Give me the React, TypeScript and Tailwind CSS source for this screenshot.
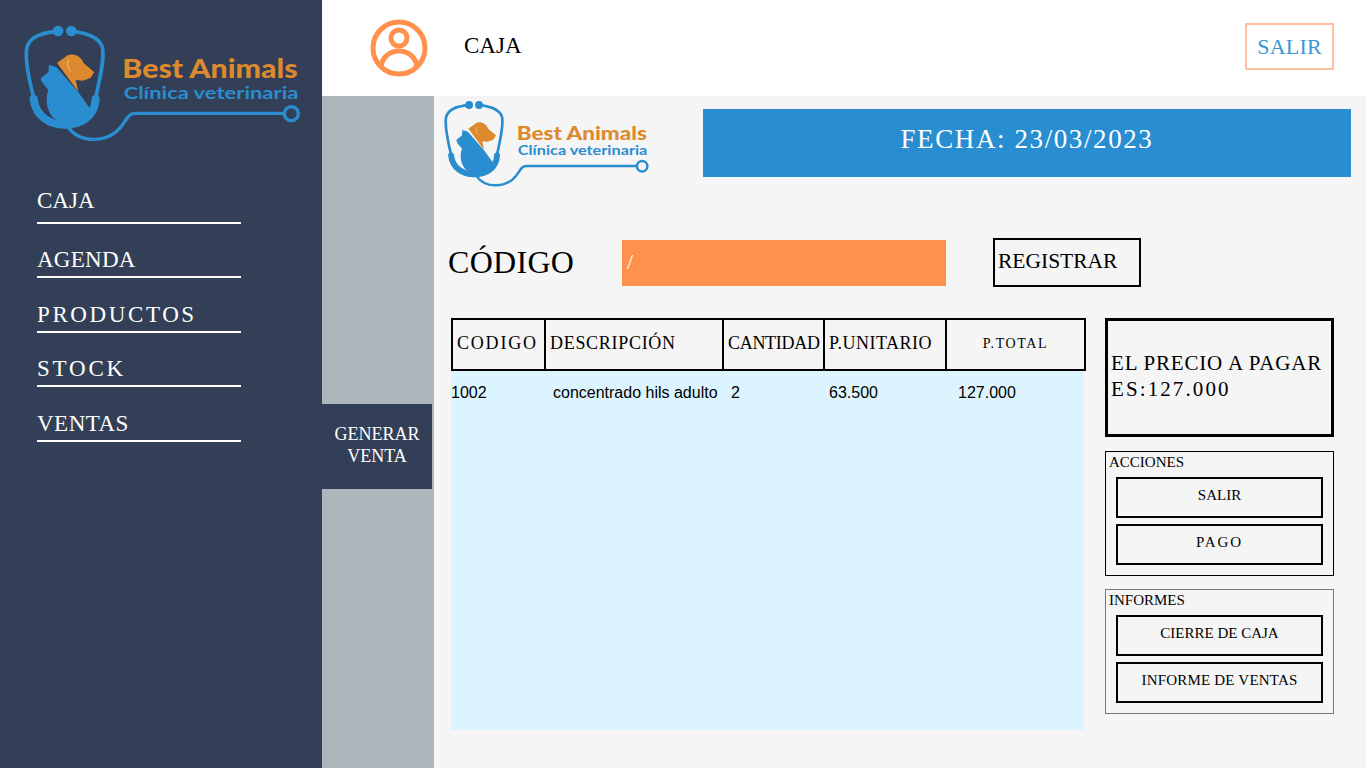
// App.tsx
// Caja screen of the Best Animals veterinary clinic app.

const display = "font-['Liberation_Serif',serif]";

const navItems = [
  { label: "CAJA", cls: "pb-[6px] tracking-[0px]" },
  { label: "AGENDA", cls: "pb-[1px] tracking-[0.25px]" },
  { label: "PRODUCTOS", cls: "pb-[1px] tracking-[2.6px]" },
  { label: "STOCK", cls: "pb-[1px] tracking-[2.8px]" },
  { label: "VENTAS", cls: "pb-[1px] tracking-[0.5px]" },
];

const columns = [
  { label: "CODIGO", width: "w-[93px]", cls: "pl-[4px] text-[18px] tracking-[1.8px]" },
  { label: "DESCRIPCIÓN", width: "w-[178px]", cls: "pl-[4px] text-[18px] tracking-[0.7px]" },
  { label: "CANTIDAD", width: "w-[101px]", cls: "pl-[4px] text-[18px] tracking-[-0.3px]" },
  { label: "P.UNITARIO", width: "w-[122px]", cls: "pl-[4px] text-[18px] tracking-[0.5px]" },
  { label: "P.TOTAL", width: "flex-1", cls: "justify-center text-[14px] tracking-[1.6px]" },
];

// Stethoscope logo, the wordmark stays real text inside the svg
function Logo({ className }: { className: string }) {
  return (
    <svg viewBox="70 40 840 360" className={className}>
      <g fill="none" stroke="#2a8dd0" strokeLinecap="round">
        <path d="M172 65 C125 70 92 80 82 112 C74 150 90 215 102 265" strokeWidth="11" />
        <path d="M218 65 C262 70 298 82 308 112 C316 150 298 215 288 265" strokeWidth="11" />
        <path d="M102 268 C108 320 150 345 195 345 C245 345 285 320 288 268" strokeWidth="24" />
        <path d="M205 352 C240 402 325 402 365 350 L385 322 Q393 311 408 311 L852 311" strokeWidth="10" />
      </g>
      <circle cx="175" cy="64" r="16" fill="#2a8dd0" />
      <circle cx="215" cy="64" r="16" fill="#2a8dd0" />
      <circle cx="875" cy="312" r="21" fill="none" stroke="#2a8dd0" strokeWidth="10" />
      {/* cat */}
      <path
        d="M148 165 L170 172 L236 248 L272 298 L245 335 L195 348 L158 322 C135 290 140 260 146 240 C135 228 122 215 124 205 L146 188 Z"
        fill="#2a8dd0"
      />
      {/* dog */}
      <path
        d="M172 160 L205 136 C225 130 244 140 252 160 L284 188 L272 205 L250 213 L228 211 L236 246 Z"
        fill="#dd8a2e"
      />
      <path d="M207 150 C200 165 208 180 214 186" fill="none" stroke="#f0d9b8" strokeWidth="2" />
      <text
        x="368"
        y="206"
        fill="#dd8a2e"
        fontFamily="Lato, sans-serif"
        fontWeight="900"
        fontSize="78"
        textLength="526"
        lengthAdjust="spacingAndGlyphs"
      >
        Best Animals
      </text>
      <text
        x="372"
        y="268"
        fill="#2a8dd0"
        fontFamily="Lato, sans-serif"
        fontWeight="700"
        fontSize="53"
        textLength="524"
        lengthAdjust="spacingAndGlyphs"
      >
        Clínica veterinaria
      </text>
    </svg>
  );
}

function UserIcon() {
  return (
    <svg viewBox="0 0 58 58" className="h-[58px] w-[58px]" fill="none" stroke="#ff914d" strokeWidth="5">
      <circle cx="29" cy="29" r="26" />
      <circle cx="29" cy="19" r="8" />
      <path d="M11 48 C12 38 20 32 29 32 C38 32 46 38 47 48" />
    </svg>
  );
}

function PanelButton({ label, tracking }: { label: string; tracking: string }) {
  return (
    <div className={`flex h-[41px] justify-center border-2 border-black pt-[6px] text-[15px] leading-[20px] text-black ${tracking} ${display}`}>
      {label}
    </div>
  );
}

type Action = { label: string; tracking: string };

function Panel({ title, actions, border }: { title: string; actions: Action[]; border: string }) {
  return (
    <div className={`h-[125px] border px-[10px] ${border}`}>
      <div className="-ml-[7px] h-[25px] text-[15px] leading-[20px] text-black">{title}</div>
      <div className="flex flex-col gap-[6px]">
        {actions.map((a) => (
          <PanelButton key={a.label} label={a.label} tracking={a.tracking} />
        ))}
      </div>
    </div>
  );
}

export default function App() {
  return (
    <div className={`flex h-[768px] w-full overflow-hidden ${display}`}>
      {/* ── SIDEBAR ──────────────────────────────────────── */}
      <aside className="w-[322px] shrink-0 bg-[#323f56]">
        <div className="pl-[23px] pt-[23px]">
          <Logo className="h-[120px] w-[280px]" />
        </div>
        <nav className="mt-[26px] flex w-[241px] flex-col pl-[37px]">
          {navItems.map((item) => (
            <div
              key={item.label}
              className={`flex h-[54.5px] items-end border-b-2 border-white text-[23px] leading-[30px] text-white ${item.cls}`}
            >
              {item.label}
            </div>
          ))}
        </nav>
      </aside>

      <div className="flex min-w-0 flex-1 flex-col">
        {/* ── HEADER ───────────────────────────────────── */}
        <header className="flex h-[96px] shrink-0 items-center bg-white pl-[48px] pr-[32px]">
          <UserIcon />
          <span className="-mt-[4px] ml-[36px] text-[23px] text-black">CAJA</span>
          <div className="-mt-[4px] ml-auto flex h-[47px] w-[89px] items-center justify-center border-2 border-[#ffbfa3] text-[22px] tracking-[0.2px] text-[#3b97d3]">
            SALIR
          </div>
        </header>

        <div className="flex min-h-0 flex-1">
          {/* ── GRAY COLUMN ──────────────────────────────── */}
          <div className="w-[112px] shrink-0 bg-[#adb6ba] pt-[308px]">
            <div className="flex h-[85px] w-[110px] flex-col items-center justify-center bg-[#323f56] pb-[3px] text-center text-[18px] leading-[22px] text-white">
              <span>GENERAR</span>
              <span>VENTA</span>
            </div>
          </div>

          {/* ── MAIN ─────────────────────────────────────── */}
          <main className="min-w-0 flex-1 bg-[#f5f5f5] text-black">
            <div className="flex pl-[9px] pt-[3px]">
              <Logo className="h-[89px] w-[208px]" />
              <div className="ml-[52px] mt-[10px] flex h-[68px] w-[648px] items-center justify-center bg-[#298dd1] pb-[8px] text-[27px] tracking-[1.6px] text-white">
                FECHA: 23/03/2023
              </div>
            </div>

            <div className="mt-[50px] flex items-center pl-[14px]">
              <div className="w-[174px] pb-[2px] text-[32px] leading-[36px] tracking-[0.3px]">CÓDIGO</div>
              <div className="flex h-[46px] w-[324px] items-center bg-[#ff914d] pb-[3px] pl-[5px] text-[22px] text-white">/</div>
              <div className="ml-[47px] flex h-[49px] w-[148px] items-center border-2 border-black pb-[3px] pl-[3px] text-[21.5px]">
                REGISTRAR
              </div>
            </div>

            <div className="mt-[31px] flex pl-[17px]">
              {/* ── TABLE ────────────────────────────────── */}
              <div className="w-[635px]">
                <div className="flex h-[53px] border-2 border-black">
                  {columns.map((col, i) => (
                    <div
                      key={col.label}
                      className={`flex items-center pb-[2px] ${col.width} ${col.cls} ${i < columns.length - 1 ? "border-r-2 border-black" : ""}`}
                    >
                      {col.label}
                    </div>
                  ))}
                </div>
                <div className="h-[359px] w-[633px] bg-[#dcf4fe] pt-[12px] font-['Liberation_Sans',sans-serif] text-[16px] leading-[20px]">
                  <div className="flex">
                    <span className="w-[102px]">1002</span>
                    <span className="w-[178px] whitespace-nowrap">concentrado hils adulto</span>
                    <span className="w-[98px]">2</span>
                    <span className="w-[129px]">63.500</span>
                    <span>127.000</span>
                  </div>
                </div>
              </div>

              {/* ── RIGHT PANELS ─────────────────────────── */}
              <div className="ml-[19px] flex w-[229px] flex-col">
                <div className="flex h-[119px] flex-col justify-center whitespace-nowrap border-[3px] border-black pb-[3px] pl-[3px] text-[21px] leading-[26px]">
                  <span className="tracking-[0.8px]">EL PRECIO A PAGAR</span>
                  <span className="tracking-[2.1px]">ES:127.000</span>
                </div>
                <div className="mt-[14px]">
                  <Panel
                    title="ACCIONES"
                    border="border-black"
                    actions={[
                      { label: "SALIR", tracking: "tracking-[0px]" },
                      { label: "PAGO", tracking: "tracking-[1.9px]" },
                    ]}
                  />
                </div>
                <div className="mt-[13px]">
                  <Panel
                    title="INFORMES"
                    border="border-[#777]"
                    actions={[
                      { label: "CIERRE DE CAJA", tracking: "tracking-[0px]" },
                      { label: "INFORME DE VENTAS", tracking: "tracking-[0.2px]" },
                    ]}
                  />
                </div>
              </div>
            </div>
          </main>
        </div>
      </div>
    </div>
  );
}
